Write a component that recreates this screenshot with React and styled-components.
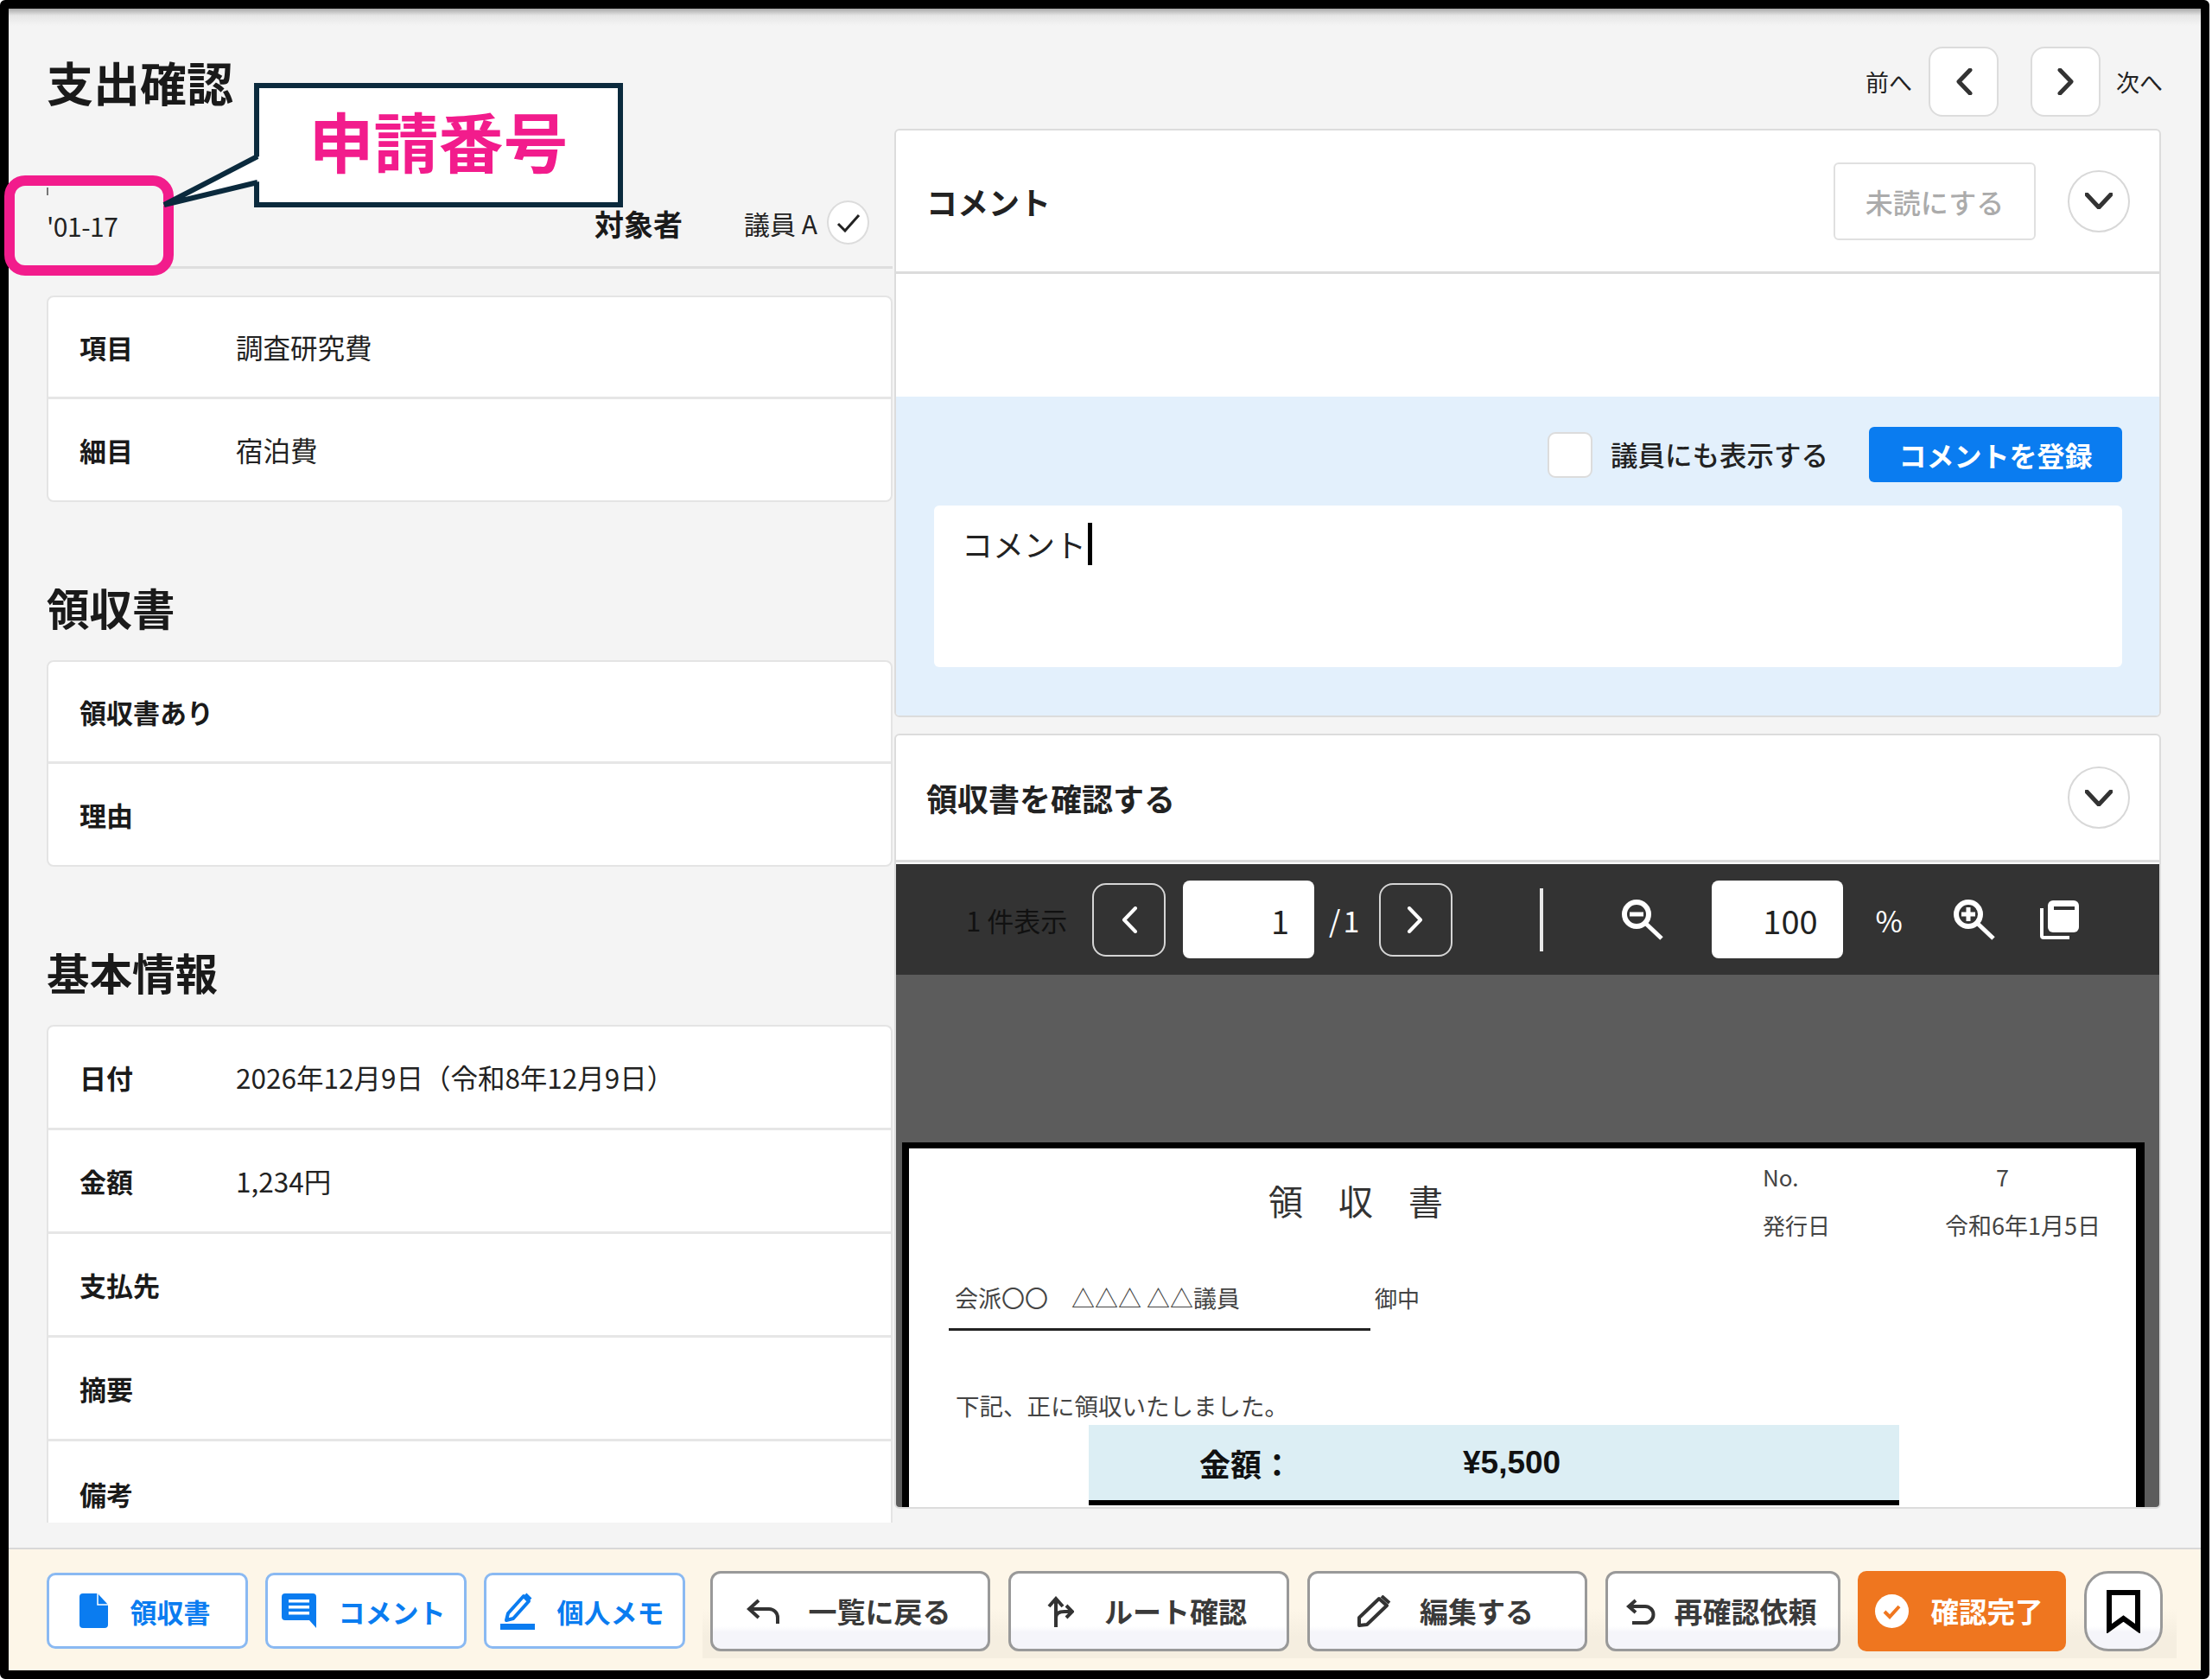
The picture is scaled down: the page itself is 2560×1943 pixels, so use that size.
import React from 'react';
import styled, { createGlobalStyle } from 'styled-components';

const GlobalStyle = createGlobalStyle`
  html, body {
    margin: 0;
    padding: 0;
    background: #fff;
  }
  body {
    font-family: "Noto Sans CJK JP", "Noto Sans", "Liberation Sans", sans-serif;
    color: #222;
  }
  * {
    box-sizing: border-box;
  }
`;

function Chevron({ dir, w, h, color = '#333', sw = 5 }) {
  const points = {
    left: '17,2 4,15.5 17,29',
    right: '3,2 16,15.5 3,29',
    down: '2,2 16,17 30,2',
  }[dir];
  const box = dir === 'down' ? '0 0 32 19' : '0 0 20 31';
  return (
    <svg width={w} height={h} viewBox={box} fill="none">
      <polyline points={points} stroke={color} strokeWidth={sw} strokeLinecap="round" strokeLinejoin="round" />
    </svg>
  );
}

function MagnifierIcon({ plus }) {
  return (
    <svg width="50" height="48" viewBox="0 0 50 48" fill="none">
      <circle cx="18" cy="18" r="14" stroke="#fff" strokeWidth="6" />
      <rect x="10" y="15.5" width="16" height="5" fill="#fff" />
      {plus && <rect x="15.5" y="10" width="5" height="16" fill="#fff" />}
      <line x1="29" y1="29" x2="47" y2="46" stroke="#fff" strokeWidth="5" />
    </svg>
  );
}

function CopyPagesIcon() {
  return (
    <svg width="46" height="46" viewBox="0 0 46 46" fill="none">
      <path d="M2 10 V42 a2 2 0 0 0 2 2 H34" stroke="#fff" strokeWidth="4" />
      <rect x="9" y="1" width="36" height="37" rx="6" fill="#fff" />
      <rect x="16" y="8" width="24" height="4" fill="#333" />
    </svg>
  );
}

function FileIcon() {
  return (
    <svg width="33" height="40" viewBox="0 0 33 40">
      <path d="M4 0 H21 L33 13 V36 a4 4 0 0 1 -4 4 H4 a4 4 0 0 1 -4 -4 V4 a4 4 0 0 1 4 -4z" fill="#0a7cf0" />
      <path d="M21 0 V13 H33" fill="none" stroke="#fff" strokeWidth="1.5" />
    </svg>
  );
}

function CommentIcon() {
  return (
    <svg width="40" height="40" viewBox="0 0 40 40">
      <path d="M4 0 H36 a4 4 0 0 1 4 4 V40 L32 31 H4 a4 4 0 0 1 -4 -4 V4 a4 4 0 0 1 4 -4z" fill="#0a7cf0" />
      <rect x="8" y="7" width="24" height="3.5" fill="#fff" />
      <rect x="8" y="14" width="24" height="3.5" fill="#fff" />
      <rect x="8" y="21" width="24" height="3.5" fill="#fff" />
    </svg>
  );
}

function MemoIcon() {
  return (
    <svg width="40" height="43" viewBox="0 0 40 43" fill="none">
      <path d="M9 24 L27 4 L33 10 L15 30 L7 32z" stroke="#0a7cf0" strokeWidth="4" strokeLinejoin="round" />
      <line x1="29" y1="2" x2="35" y2="8" stroke="#0a7cf0" strokeWidth="4" />
      <rect x="0" y="36" width="40" height="7" fill="#0a7cf0" />
    </svg>
  );
}

function BackIcon() {
  return (
    <svg width="39" height="30" viewBox="0 0 39 30" fill="none">
      <path d="M14 2 L3 12 L14 22 M3 12 H26 a10 10 0 0 1 10 10 V29" stroke="#333" strokeWidth="4" />
    </svg>
  );
}

function RouteIcon() {
  return (
    <svg width="31" height="36" viewBox="0 0 31 36" fill="none">
      <path d="M10 36 V3 M2 12 L10 3 L18 12" stroke="#333" strokeWidth="4" />
      <path d="M10 25 C10 20 14 18 20 18 H28 M22 11 L29 18 L22 25" stroke="#333" strokeWidth="4" />
    </svg>
  );
}

function PencilIcon() {
  return (
    <svg width="39" height="37" viewBox="0 0 39 37" fill="none">
      <path d="M2 26 L25 4 L34 12 L11 34 L2 35z" stroke="#333" strokeWidth="4" strokeLinejoin="round" />
      <line x1="28" y1="1" x2="37" y2="9" stroke="#333" strokeWidth="4" />
    </svg>
  );
}

function UndoIcon() {
  return (
    <svg width="34" height="30" viewBox="0 0 34 30" fill="none">
      <path d="M11 2 L3 9 L11 16 M3 9 H22 a9.5 9.5 0 0 1 0 19 H7" stroke="#333" strokeWidth="4" />
    </svg>
  );
}

function DoneIcon() {
  return (
    <svg width="39" height="41" viewBox="0 0 39 41">
      <circle cx="19.5" cy="20.5" r="19.5" fill="#fff" />
      <polyline points="11,21 17,27 28,15" fill="none" stroke="#ef761f" strokeWidth="4" />
    </svg>
  );
}

function BookmarkIcon() {
  return (
    <svg width="39" height="50" viewBox="0 0 39 50" fill="none">
      <path d="M3 3 H36 V45 L19.5 33 L3 45z" stroke="#000" strokeWidth="6" />
    </svg>
  );
}

function InfoRow({ label, value, tall }) {
  return (
    <Row $tall={tall}>
      <RowLabel>{label}</RowLabel>
      {value && <RowValue>{value}</RowValue>}
    </Row>
  );
}

function App() {
  return (
    <Frame>
      <GlobalStyle />
      <Main>
        <LeftColumn>
          <PageTitle>支出確認</PageTitle>
          <MetaRow>
            <AppNumber>
              <Tick />
              '01-17
            </AppNumber>
            <Target>
              <TargetLabel>対象者</TargetLabel>
              <TargetName>議員 A</TargetName>
              <CheckCircle>
                <svg width="28" height="22" viewBox="0 0 28 22" fill="none">
                  <polyline points="2,12 10,20 26,2" stroke="#222" strokeWidth="3" />
                </svg>
              </CheckCircle>
            </Target>
          </MetaRow>

          <InfoCard>
            <InfoRow label="項目" value="調査研究費" />
            <InfoRow label="細目" value="宿泊費" />
          </InfoCard>

          <SectionTitle>領収書</SectionTitle>
          <InfoCard>
            <InfoRow label="領収書あり" />
            <InfoRow label="理由" />
          </InfoCard>

          <SectionTitle>基本情報</SectionTitle>
          <InfoCard $open>
            <InfoRow tall label="日付" value="2026年12月9日（令和8年12月9日）" />
            <InfoRow tall label="金額" value="1,234円" />
            <InfoRow tall label="支払先" />
            <InfoRow tall label="摘要" />
            <InfoRow tall label="備考" />
          </InfoCard>
        </LeftColumn>

        <RightColumn>
          <NavRow>
            <NavText>前へ</NavText>
            <NavButton>
              <Chevron dir="left" w={20} h={31} />
            </NavButton>
            <NavButton $next>
              <Chevron dir="right" w={20} h={31} />
            </NavButton>
            <NavText>次へ</NavText>
          </NavRow>

          <Panel>
            <PanelHeader $h={166}>
              <PanelTitle>コメント</PanelTitle>
              <HeaderActions>
                <UnreadButton>未読にする</UnreadButton>
                <CircleButton>
                  <Chevron dir="down" w={32} h={19} />
                </CircleButton>
              </HeaderActions>
            </PanelHeader>
            <CommentList />
            <CommentForm>
              <FormRow>
                <Checkbox />
                <CheckLabel>議員にも表示する</CheckLabel>
                <SubmitButton>コメントを登録</SubmitButton>
              </FormRow>
              <CommentInput>
                コメント
                <Caret />
              </CommentInput>
            </CommentForm>
          </Panel>

          <ReceiptPanel>
            <PanelHeader $h={147}>
              <PanelTitle>領収書を確認する</PanelTitle>
              <CircleButton>
                <Chevron dir="down" w={32} h={19} />
              </CircleButton>
            </PanelHeader>
            <Toolbar>
              <CountText>1 件表示</CountText>
              <PageButton $ml={28}>
                <Chevron dir="left" w={20} h={31} color="#fff" sw={4} />
              </PageButton>
              <PageInput $ml={20}>1</PageInput>
              <PageTotal>/1</PageTotal>
              <PageButton $ml={19}>
                <Chevron dir="right" w={20} h={31} color="#fff" sw={4} />
              </PageButton>
              <ToolDivider />
              <ToolIcon $ml={90}>
                <MagnifierIcon />
              </ToolIcon>
              <PageInput $ml={55}>100</PageInput>
              <ToolText $ml={38}>%</ToolText>
              <ToolIcon $ml={58}>
                <MagnifierIcon plus />
              </ToolIcon>
              <ToolIcon $ml={51}>
                <CopyPagesIcon />
              </ToolIcon>
            </Toolbar>
            <Viewer>
              <Receipt>
                <ReceiptTop>
                  <ReceiptTitle>領収書</ReceiptTitle>
                  <ReceiptMeta>
                    <span>No.</span>
                    <MetaValue $indent={59}>7</MetaValue>
                    <span>発行日</span>
                    <MetaValue>令和6年1月5日</MetaValue>
                  </ReceiptMeta>
                </ReceiptTop>
                <Recipient>
                  <RecipientName>会派〇〇　△△△ △△議員</RecipientName>
                  <Honorific>御中</Honorific>
                </Recipient>
                <ReceiptNote>下記、正に領収いたしました。</ReceiptNote>
                <AmountBand>
                  <AmountLabel>金額：</AmountLabel>
                  <AmountValue>¥5,500</AmountValue>
                </AmountBand>
              </Receipt>
            </Viewer>
          </ReceiptPanel>
        </RightColumn>
      </Main>

      <Footer>
        <BlueButton>
          <FileIcon />
          領収書
        </BlueButton>
        <BlueButton>
          <CommentIcon />
          コメント
        </BlueButton>
        <BlueButton>
          <MemoIcon />
          個人メモ
        </BlueButton>
        <ActionGroup>
          <ActionButton $w={324}>
            <BackIcon />
            一覧に戻る
          </ActionButton>
          <ActionButton $w={325} $gap={35}>
            <RouteIcon />
            ルート確認
          </ActionButton>
          <ActionButton $w={324}>
            <PencilIcon />
            編集する
          </ActionButton>
          <ActionButton $w={272} $gap={22}>
            <UndoIcon />
            再確認依頼
          </ActionButton>
          <DoneButton>
            <DoneIcon />
            確認完了
          </DoneButton>
          <BookmarkButton>
            <BookmarkIcon />
          </BookmarkButton>
        </ActionGroup>
      </Footer>

      <PinkFrame />
      <Callout>申請番号</Callout>
      <CalloutTail viewBox="0 0 130 70" width="130" height="70">
        <polygon points="8,63 120,6 124,6 124,35 120,35" fill="#fff" />
        <polyline points="118,6 10,62 118,36" fill="none" stroke="#0b2a3d" strokeWidth="6" />
      </CalloutTail>
    </Frame>
  );
}

export default App;


const Frame = styled.div`
  position: relative;
  width: 2557px;
  height: 1943px;
  border: 10px solid #000;
  border-radius: 6px;
  display: flex;
  flex-direction: column;
  background: linear-gradient(#a8a8a8 0, #e6e6e6 8px, #f4f4f4 20px);
`;

const Main = styled.main`
  flex: 1;
  display: flex;
  align-items: flex-start;
  gap: 2px;
  padding: 0 46px 0 44px;
  min-height: 0;
`;

const LeftColumn = styled.section`
  width: 979px;
  height: 1752px;
  overflow: hidden;
  flex-shrink: 0;
`;

const PageTitle = styled.h1`
  margin: 58px 0 0;
  font-size: 54px;
  line-height: 54px;
  font-weight: 700;
  color: #1a1a1a;
`;

const MetaRow = styled.div`
  height: 189px;
  padding: 85px 27px 0 0;
  display: flex;
  align-items: center;
  justify-content: space-between;
  border-bottom: 3px solid #dedede;
`;

const AppNumber = styled.div`
  position: relative;
  font-size: 30px;
  line-height: 1;
  letter-spacing: -0.5px;
  margin-top: 6px;
  color: #222;
`;

const Tick = styled.span`
  position: absolute;
  left: 0;
  top: -29px;
  width: 2px;
  height: 9px;
  background: #777;
`;

const Target = styled.div`
  display: flex;
  align-items: center;
`;

const TargetLabel = styled.span`
  font-size: 34px;
  line-height: 1;
  font-weight: 700;
  margin-top: 2px;
  margin-right: 71px;
  color: #1a1a1a;
`;

const TargetName = styled.span`
  font-size: 30px;
  line-height: 1;
  margin-right: 11px;
`;

const CheckCircle = styled.span`
  width: 49px;
  height: 51px;
  border-radius: 50%;
  background: #fff;
  border: 2px solid #dcdcdc;
  display: flex;
  align-items: center;
  justify-content: center;
`;

const InfoCard = styled.div`
  margin-top: 31px;
  background: #fff;
  border: 2px solid #e4e4e4;
  border-radius: 8px;
  ${p => p.$open && 'border-bottom: 0;'}
`;

const Row = styled.div`
  height: ${p => (p.$tall ? 120 : 117.5)}px;
  padding-left: 36px;
  display: flex;
  align-items: center;
  border-bottom: 3px solid #e6e6e6;
  &:last-child {
    border-bottom: 0;
  }
`;

const RowLabel = styled.span`
  width: 181px;
  font-size: 31px;
  line-height: 1;
  font-weight: 700;
  color: #1a1a1a;
  white-space: nowrap;
`;

const RowValue = styled.span`
  font-size: 31.5px;
  line-height: 1;
  color: #222;
`;

const SectionTitle = styled.h2`
  margin: 97px 0 36px;
  font-size: 49.5px;
  line-height: 50px;
  font-weight: 700;
  color: #1a1a1a;
`;

const RightColumn = styled.section`
  flex: 1;
  min-width: 0;
`;

const NavRow = styled.div`
  margin: 44px -2px 0 0;
  height: 80px;
  display: flex;
  align-items: center;
  justify-content: flex-end;
`;

const NavText = styled.span`
  font-size: 27px;
  line-height: 1;
  color: #222;
`;

const NavButton = styled.span`
  width: 81px;
  height: 81px;
  margin: ${p => (p.$next ? '0 18px 0 37px' : '0 0 0 19px')};
  background: #fff;
  border: 2px solid #dcdcdc;
  border-radius: 16px;
  display: flex;
  align-items: center;
  justify-content: center;
`;

const Panel = styled.div`
  margin-top: 15px;
  background: #fff;
  border: 2px solid #dcdcdc;
  border-radius: 6px;
  overflow: hidden;
`;

const ReceiptPanel = styled(Panel)`
  margin-top: 19px;
  height: 897px;
  display: flex;
  flex-direction: column;
`;

const PanelHeader = styled.div`
  height: ${p => p.$h}px;
  flex-shrink: 0;
  padding: 0 34px 0 35px;
  display: flex;
  align-items: center;
  justify-content: space-between;
  border-bottom: 3px solid #dcdcdc;
`;

const PanelTitle = styled.h3`
  margin: 0;
  font-size: 36px;
  line-height: 1;
  font-weight: 700;
  color: #222;
`;

const HeaderActions = styled.div`
  display: flex;
  align-items: center;
  gap: 37px;
`;

const UnreadButton = styled.span`
  width: 234px;
  height: 90px;
  border: 2px solid #e0e0e0;
  border-radius: 6px;
  display: flex;
  align-items: center;
  justify-content: center;
  font-size: 32px;
  line-height: 1;
  font-weight: 500;
  color: #ababab;
`;

const CircleButton = styled.span`
  width: 72px;
  height: 72px;
  border-radius: 50%;
  border: 2px solid #d8d8d8;
  display: flex;
  align-items: center;
  justify-content: center;
`;

const CommentList = styled.div`
  height: 142px;
`;

const CommentForm = styled.div`
  height: 369px;
  padding: 35px 43px 0 44px;
  background: #e3f0fc;
`;

const FormRow = styled.div`
  height: 64px;
  display: flex;
  align-items: center;
  justify-content: flex-end;
`;

const Checkbox = styled.span`
  width: 52px;
  height: 53px;
  background: #fff;
  border: 2px solid #dcdcdc;
  border-radius: 9px;
`;

const CheckLabel = styled.span`
  margin: 0 47px 0 21px;
  font-size: 31.5px;
  line-height: 1;
  font-weight: 500;
  color: #222;
`;

const SubmitButton = styled.span`
  width: 293px;
  height: 64px;
  background: #0a7cf0;
  border-radius: 6px;
  display: flex;
  align-items: center;
  justify-content: center;
  font-size: 32px;
  line-height: 1;
  font-weight: 700;
  color: #fff;
`;

const CommentInput = styled.div`
  margin-top: 27px;
  height: 187px;
  padding: 20px 32px;
  background: #fff;
  border-radius: 6px;
  display: flex;
  align-items: flex-start;
  font-size: 36px;
  line-height: 49px;
  color: #222;
`;

const Caret = styled.span`
  width: 5px;
  height: 49px;
  margin-left: 2px;
  background: #000;
`;

const Toolbar = styled.div`
  height: 128px;
  flex-shrink: 0;
  margin-top: 2px;
  padding-left: 81px;
  background: #333;
  display: flex;
  align-items: center;
`;

const CountText = styled.span`
  width: 118px;
  font-size: 31px;
  line-height: 1;
  color: #111;
  white-space: nowrap;
`;

const PageButton = styled.span`
  width: 85px;
  height: 85px;
  margin-left: ${p => p.$ml}px;
  border: 2px solid #d5d5d5;
  border-radius: 16px;
  display: flex;
  align-items: center;
  justify-content: center;
`;

const PageInput = styled.span`
  width: 152px;
  height: 90px;
  margin-left: ${p => p.$ml}px;
  padding: 2px 29px 0 0;
  background: #fff;
  border-radius: 8px;
  display: flex;
  align-items: center;
  justify-content: flex-end;
  font-size: 38px;
  line-height: 1;
  color: #222;
`;

const ToolText = styled.span`
  margin-left: ${p => p.$ml}px;
  padding-top: 2px;
  font-size: 34px;
  line-height: 1;
  color: #fff;
`;

const PageTotal = styled(ToolText)`
  margin-left: 17px;
  letter-spacing: 3.2px;
`;

const ToolDivider = styled.span`
  width: 4px;
  height: 73px;
  margin-left: 101px;
  background: #e8e8e8;
`;

const ToolIcon = styled.span`
  display: flex;
  margin-left: ${p => p.$ml}px;
`;

const Viewer = styled.div`
  flex: 1;
  min-height: 0;
  padding: 194px 17px 0 7px;
  background: #5c5c5c;
  overflow: hidden;
`;

const Receipt = styled.div`
  height: 100%;
  background: #fff;
  border: solid #000;
  border-width: 7px 10px 0 8px;
`;

const ReceiptTop = styled.div`
  display: flex;
  align-items: flex-start;
  justify-content: space-between;
  padding: 20px 42px 0 416px;
`;

const ReceiptTitle = styled.div`
  margin-top: 20px;
  font-size: 40px;
  line-height: 1;
  letter-spacing: 41px;
  font-weight: 400;
  color: #333;
`;

const ReceiptMeta = styled.div`
  width: 390px;
  display: grid;
  grid-template-columns: 211px 1fr;
  row-gap: 30px;
  font-size: 26px;
  line-height: 26px;
  color: #444;
`;

const MetaValue = styled.span`
  margin-left: ${p => p.$indent || 0}px;
  font-size: 27px;
  white-space: nowrap;
`;

const Recipient = styled.div`
  margin: 58px 0 0 46px;
  display: flex;
  align-items: flex-start;
  font-size: 27px;
  line-height: 26px;
  color: #444;
`;

const RecipientName = styled.div`
  width: 488px;
  padding: 0 0 22px 7px;
  border-bottom: 3px solid #222;
  white-space: nowrap;
`;

const Honorific = styled.span`
  margin-left: 5px;
  font-size: 26px;
`;

const ReceiptNote = styled.div`
  margin: 73px 0 0 54px;
  font-size: 27.5px;
  line-height: 26px;
  color: #444;
`;

const AmountBand = styled.div`
  width: 938px;
  height: 93px;
  margin: 10px 0 0 208px;
  padding: 0 0 0 128px;
  background: #dceef4;
  border-bottom: 6px solid #000;
  display: flex;
  align-items: center;
`;

const AmountLabel = styled.span`
  width: 305px;
  font-size: 36px;
  line-height: 1;
  font-weight: 700;
  color: #111;
`;

const AmountValue = styled.span`
  font-family: "Liberation Sans", sans-serif;
  font-size: 37px;
  line-height: 1;
  font-weight: 700;
  color: #111;
`;

const Footer = styled.footer`
  height: 142px;
  flex-shrink: 0;
  padding-left: 44px;
  background: #fdf6e8;
  border-top: 2px solid #d8d8d8;
  display: flex;
  align-items: flex-start;
  gap: 20px;
`;

const BlueButton = styled.span`
  width: 233px;
  height: 88px;
  margin-top: 27px;
  padding-right: 6px;
  background: #fff;
  border: 3px solid #8ab9f2;
  border-radius: 10px;
  display: flex;
  align-items: center;
  justify-content: center;
  gap: 26px;
  font-size: 31px;
  line-height: 1;
  font-weight: 700;
  color: #0a7cf0;
  white-space: nowrap;
`;

const ActionGroup = styled.div`
  height: 126px;
  padding: 25px 16px 0 9px;
  display: flex;
  align-items: flex-start;
  gap: 21px;
  background: linear-gradient(transparent 55%, #f5eee0 80%);
`;

const ActionButton = styled.span`
  width: ${p => p.$w}px;
  height: 93px;
  padding-right: 4px;
  background: linear-gradient(#fff 70%, #f5f5fa 78%);
  border: 3px solid #999;
  border-radius: 12px;
  display: flex;
  align-items: center;
  justify-content: center;
  gap: ${p => p.$gap || 33}px;
  font-size: 33px;
  line-height: 1;
  font-weight: 700;
  color: #3a3a3a;
  white-space: nowrap;
`;

const DoneButton = styled.span`
  width: 241px;
  height: 93px;
  margin-left: -1px;
  padding-right: 6px;
  background: #ef761f;
  border-radius: 10px;
  display: flex;
  align-items: center;
  justify-content: center;
  gap: 25px;
  font-size: 32.5px;
  line-height: 1;
  font-weight: 700;
  color: #fff;
  white-space: nowrap;
`;

const BookmarkButton = styled.span`
  width: 91px;
  height: 93px;
  background: linear-gradient(#fff 70%, #f5f5fa 78%);
  border: 3px solid #999;
  border-radius: 28px;
  display: flex;
  align-items: center;
  justify-content: center;
`;

const PinkFrame = styled.div`
  position: absolute;
  left: -5px;
  top: 193px;
  width: 196px;
  height: 116px;
  border: 12px solid #f21c8c;
  border-radius: 24px;
`;

const Callout = styled.div`
  position: absolute;
  left: 284px;
  top: 86px;
  width: 427px;
  height: 144px;
  padding-bottom: 14px;
  background: #fff;
  border: 6px solid #0b2a3d;
  display: flex;
  align-items: center;
  justify-content: center;
  font-size: 75px;
  line-height: 1;
  font-weight: 700;
  color: #f21c8c;
`;

const CalloutTail = styled.svg`
  position: absolute;
  left: 170px;
  top: 165px;
`;
